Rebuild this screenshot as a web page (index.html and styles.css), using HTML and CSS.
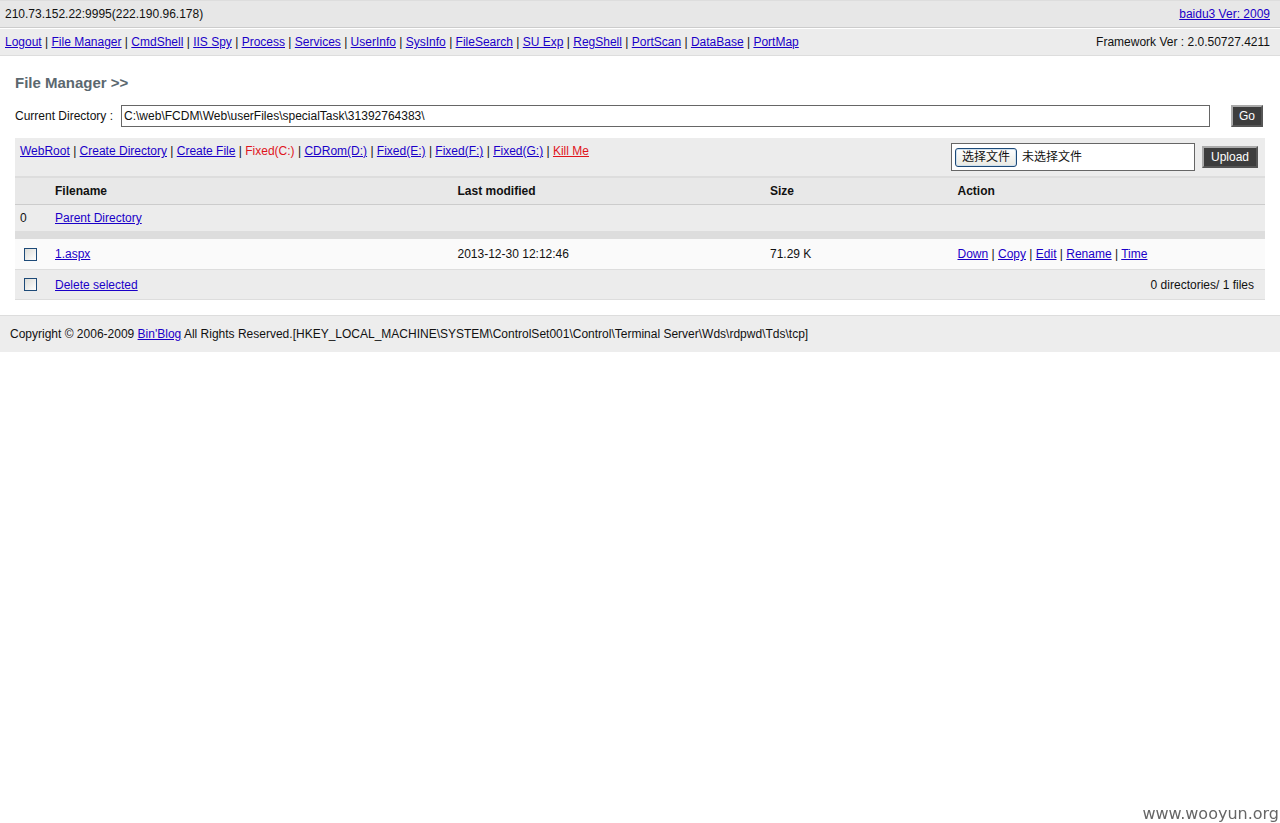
FILE: index.html
```html
<!DOCTYPE html>
<html lang="en">
<head>
<meta charset="utf-8">
<title>File Manager</title>
<link rel="stylesheet" href="styles.css">
</head>
<body>
<header>
  <div class="bar host-bar">
    <span>210.73.152.22:9995(222.190.96.178)</span>
    <a href="#">baidu3 Ver: 2009</a>
  </div>
  <div class="bar menu-bar">
    <nav><a href="#">Logout</a> | <a href="#">File Manager</a> | <a href="#">CmdShell</a> | <a href="#">IIS Spy</a> | <a href="#">Process</a> | <a href="#">Services</a> | <a href="#">UserInfo</a> | <a href="#">SysInfo</a> | <a href="#">FileSearch</a> | <a href="#">SU Exp</a> | <a href="#">RegShell</a> | <a href="#">PortScan</a> | <a href="#">DataBase</a> | <a href="#">PortMap</a></nav>
    <span>Framework Ver : 2.0.50727.4211</span>
  </div>
</header>
<main class="content">
  <h2 class="title">File Manager &gt;&gt;</h2>
  <form class="directory">
    <label for="dir">Current Directory :</label>
    <input class="field directory-input" id="dir" type="text" value="C:\web\FCDM\Web\userFiles\specialTask\31392764383\">
    <button class="action" type="button">Go</button>
  </form>
  <div class="tools">
    <div class="drives"><a href="#">WebRoot</a> | <a href="#">Create Directory</a> | <a href="#">Create File</a> | <span class="current">Fixed(C:)</span> | <a href="#">CDRom(D:)</a> | <a href="#">Fixed(E:)</a> | <a href="#">Fixed(F:)</a> | <a href="#">Fixed(G:)</a> | <a class="kill" href="#">Kill Me</a></div>
    <form class="upload">
      <label class="field picker">
        <input class="picker-input" type="file">
        <span class="picker-button">选择文件</span>
        <span>未选择文件</span>
      </label>
      <button class="action" type="button">Upload</button>
    </form>
  </div>
  <table class="files">
    <colgroup><col class="col-check"><col class="col-name"><col class="col-date"><col class="col-size"><col class="col-action"></colgroup>
    <thead>
      <tr class="head"><th></th><th>Filename</th><th>Last modified</th><th>Size</th><th>Action</th></tr>
    </thead>
    <tbody>
      <tr class="parent"><td>0</td><td colspan="4"><a href="#">Parent Directory</a></td></tr>
      <tr class="divider"><td colspan="5"></td></tr>
      <tr class="file">
        <td class="check"><input class="box" type="checkbox" aria-label="Select 1.aspx"></td>
        <td><a href="#">1.aspx</a></td>
        <td>2013-12-30 12:12:46</td>
        <td>71.29 K</td>
        <td><a href="#">Down</a> | <a href="#">Copy</a> | <a href="#">Edit</a> | <a href="#">Rename</a> | <a href="#">Time</a></td>
      </tr>
      <tr class="summary">
        <td class="check"><input class="box" type="checkbox" aria-label="Select all files"></td>
        <td colspan="3"><a href="#">Delete selected</a></td>
        <td class="total">0 directories/ 1 files</td>
      </tr>
    </tbody>
  </table>
</main>
<footer class="footer">Copyright © 2006-2009 <a href="#">Bin'Blog</a> All Rights Reserved.[HKEY_LOCAL_MACHINE\SYSTEM\ControlSet001\Control\Terminal Server\Wds\rdpwd\Tds\tcp]</footer>
<div class="watermark">www.wooyun.org</div>
</body>
</html>
```

FILE: styles.css
```css
* {
  box-sizing: border-box;
}

body {
  margin: 0;
  background: #fff;
  color: #111;
  font: 12px/16px "Liberation Sans", Arial, "Noto Sans CJK SC", sans-serif;
}

a {
  color: #1a00c8;
}

.bar {
  display: flex;
  justify-content: space-between;
  padding: 5px 10px 5px 5px;
}

.host-bar {
  border-top: 1px solid #ddd;
  border-bottom: 1px solid #ccc;
  background: #e7e7e7;
}

.menu-bar {
  margin-top: 1px;
  border-bottom: 1px solid #ddd;
  background: #ececec;
}

.content {
  padding: 15px;
}

.title {
  margin: 0;
  padding-top: 4px;
  color: #5b686f;
  font-size: 15px;
  line-height: 16px;
}

.directory {
  display: flex;
  align-items: center;
  margin: 14px 0 11px;
}

.field {
  border: 1px solid #666;
  background: #fff;
  color: #111;
}

.directory-input {
  flex: 1;
  min-width: 0;
  height: 22px;
  margin: 0 21px 0 8px;
  padding: 2px;
  font: inherit;
}

.action {
  height: 22px;
  padding: 0 6px;
  border: 2px solid;
  border-color: #aaa #555 #555 #aaa;
  background: #3d3d3d;
  color: #fff;
  font: inherit;
  line-height: 18px;
}

.directory .action {
  margin-right: 2px;
}

.upload .action {
  padding: 0 7px;
}

.tools {
  display: flex;
  justify-content: space-between;
  padding: 5px 7px 5px 5px;
  background: #ececec;
}

.upload {
  display: flex;
  align-items: center;
  gap: 7px;
}

.picker {
  position: relative;
  display: flex;
  align-items: center;
  gap: 5px;
  width: 244px;
  height: 28px;
  padding: 0 3px;
}

.picker-input {
  position: absolute;
  inset: 0;
  width: 100%;
  opacity: 0;
}

.picker-button {
  padding: 0 6px;
  border: 1px solid #1d4a78;
  border-radius: 3px;
  background: linear-gradient(#fff, #e9e9e2);
  line-height: 17px;
  box-shadow: inset 0 0 0 1px #cfe0ee;
}

.current,
.kill {
  color: #e0141c;
}

.files {
  width: 100%;
  border-collapse: separate;
  border-spacing: 0;
  table-layout: fixed;
}

.col-check { width: 35px; }
.col-date { width: 25%; }
.col-size { width: 15%; }
.col-action { width: 25%; }

.files th,
.files td {
  padding: 5px;
  border-bottom: 1px solid #ddd;
  text-align: left;
}

.head th {
  border-top: 2px solid #ddd;
  border-bottom-color: #ccc;
  background: #e8e8e8;
}

.parent,
.summary {
  background: #ececec;
}

.files .parent td {
  border-bottom: 0;
}

.files .divider td {
  height: 8px;
  padding: 0;
  border: 0;
  background: #ddd;
}

.file {
  background: #fafafa;
}

.files .file td,
.files .summary td {
  height: 30px;
  padding-top: 5px;
  padding-bottom: 5px;
}

.files .check {
  padding-left: 9px;
}

.files .file td {
  height: 31px;
}

.files .total {
  padding-right: 11px;
}

.files .total {
  text-align: right;
}

.box {
  display: block;
  appearance: none;
  width: 13px;
  height: 13px;
  margin: 0;
  border: 1px solid #1d4a78;
  background: linear-gradient(135deg, #dcdcd7, #fff);
}

.footer {
  padding: 10px;
  border-top: 1px solid #ddd;
  background: #ededed;
}

.watermark {
  position: fixed;
  right: 1px;
  bottom: 0;
  color: #666;
  font: 16px/19px "DejaVu Sans", sans-serif;
}
```
